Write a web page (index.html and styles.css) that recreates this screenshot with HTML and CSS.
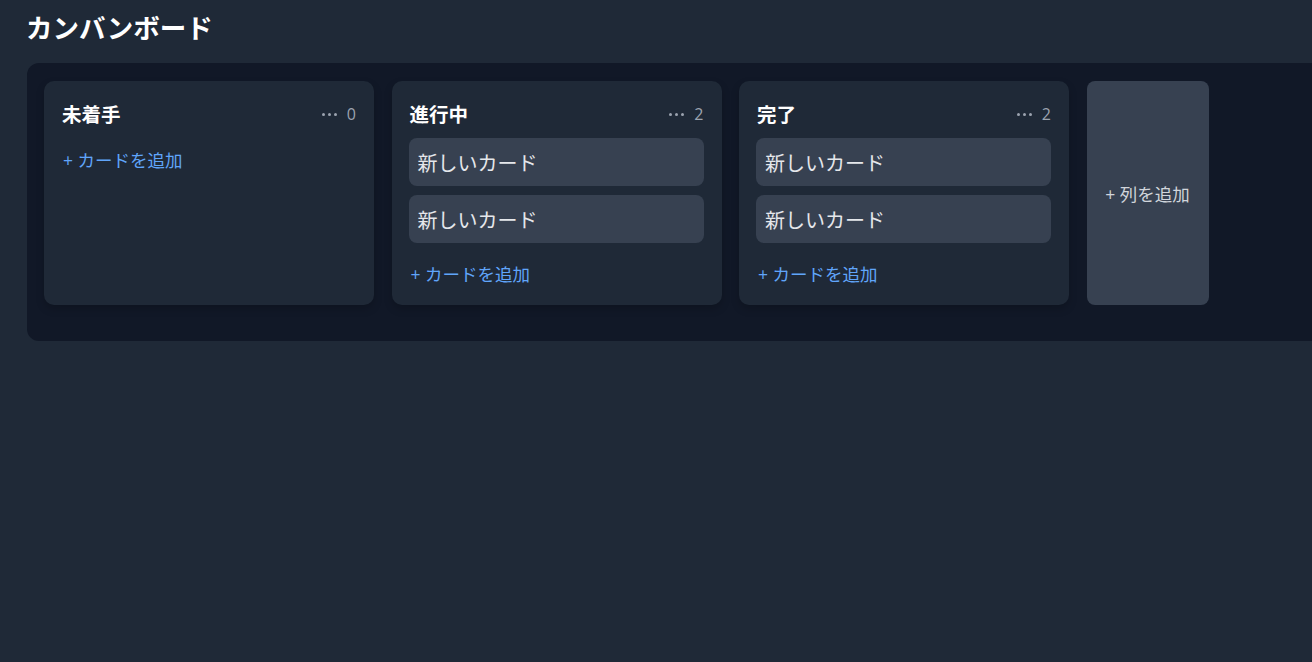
FILE: index.html
```html
<!DOCTYPE html>
<html lang="ja">
<head>
<meta charset="utf-8">
<title>カンバンボード</title>
<link rel="stylesheet" href="styles.css">
</head>
<body>
<div class="page">
  <h1 class="title">カンバンボード</h1>
  <div class="board">
    <section class="column">
      <header class="col-head">
        <h2 class="col-title">未着手</h2>
        <div class="col-meta">
          <span class="dots"><i></i><i></i><i></i></span>
          <span class="count">0</span>
        </div>
      </header>
      <div class="cards"></div>
      <button class="add-card">+ カードを追加</button>
    </section>
    <section class="column">
      <header class="col-head">
        <h2 class="col-title">進行中</h2>
        <div class="col-meta">
          <span class="dots"><i></i><i></i><i></i></span>
          <span class="count">2</span>
        </div>
      </header>
      <div class="cards">
        <div class="card">新しいカード</div>
        <div class="card">新しいカード</div>
      </div>
      <button class="add-card">+ カードを追加</button>
    </section>
    <section class="column">
      <header class="col-head">
        <h2 class="col-title">完了</h2>
        <div class="col-meta">
          <span class="dots"><i></i><i></i><i></i></span>
          <span class="count">2</span>
        </div>
      </header>
      <div class="cards">
        <div class="card">新しいカード</div>
        <div class="card">新しいカード</div>
      </div>
      <button class="add-card">+ カードを追加</button>
    </section>
    <button class="add-column">+ 列を追加</button>
  </div>
</div>
</body>
</html>
```

FILE: styles.css
```css
html, body {
  margin: 0;
  padding: 0;
  background: #1f2937;
  height: 100%;
  overflow: hidden;
}
body {
  font-family: "Open Sans", "Noto Sans CJK JP", sans-serif;
  color: #f3f4f6;
}
.page {
  padding: 10px 0 0 27px;
  overflow: hidden;
}
.title {
  margin: 0 0 17px -1px;
  font-size: 26.5px;
  line-height: 36px;
  font-weight: 700;
  color: #ffffff;
}
.board {
  display: flex;
  align-items: stretch;
  gap: 17.5px;
  width: 1320px;
  padding: 18px 17px 36px 17px;
  background: #111827;
  border-radius: 12px 0 0 12px;
}
.column {
  flex: 0 0 330px;
  box-sizing: border-box;
  display: flex;
  flex-direction: column;
  padding: 17px 18px 18px 17px;
  background: #1f2937;
  border-radius: 10px;
  box-shadow: 0 4px 8px rgba(0, 0, 0, 0.18);
}
.col-head {
  display: flex;
  align-items: center;
  justify-content: space-between;
  height: 32px;
  margin-bottom: 8px;
}
.col-title {
  margin: -1px 0 0 1px;
  font-size: 19.5px;
  font-weight: 700;
  color: #ffffff;
}
.col-meta {
  display: flex;
  align-items: center;
  gap: 10px;
  color: #9ca3af;
  font-size: 16px;
}
.dots {
  display: flex;
  gap: 3px;
}
.dots i {
  width: 3px;
  height: 3px;
  border-radius: 50%;
  background: #9ca3af;
}
.count {
  line-height: 20px;
}
.cards {
  display: flex;
  flex-direction: column;
}
.card {
  height: 48px;
  box-sizing: border-box;
  display: flex;
  align-items: center;
  padding: 0 9px;
  margin-bottom: 9px;
  background: #374151;
  border-radius: 8px;
  font-size: 20px;
  color: #e5e7eb;
}
.add-card {
  align-self: flex-start;
  margin-top: 8px;
  padding: 0 1px 0 2px;
  height: 27px;
  border: 0;
  background: none;
  font-family: inherit;
  font-size: 17.5px;
  color: #60a5fa;
  cursor: pointer;
}
.add-column {
  flex: 0 0 122px;
  border: 0;
  border-radius: 8px;
  background: #374151;
  font-family: inherit;
  font-size: 17.5px;
  color: #d1d5db;
  cursor: pointer;
}
```
